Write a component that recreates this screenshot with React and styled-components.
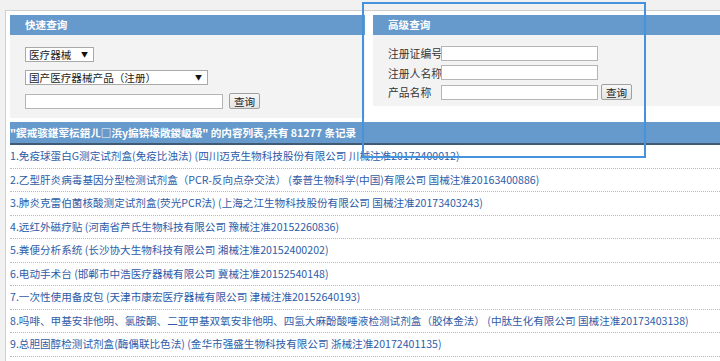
import React from "react";
import styled, { createGlobalStyle } from "styled-components";

const GlobalStyle = createGlobalStyle`
  html, body {
    margin: 0;
    padding: 0;
    background: #f1f1f1;
    font-family: "Noto Sans CJK SC", "Noto Sans", sans-serif;
    overflow: hidden;
  }
`;

const Page = styled.div`
  position: relative;
  width: 720px;
  height: 361px;
  padding-top: 10px;
  box-sizing: border-box;
`;

const Frame = styled.div`
  margin-left: 5px;
  background: #fff;
  border-top: 1px solid #cfcfcf;
  border-left: 1px solid #cfcfcf;
  padding: 4px 0 0 4px;
  height: 351px;
  box-sizing: border-box;
  overflow: hidden;
`;

const Top = styled.div`
  display: flex;
  align-items: flex-start;
  gap: 8px;
  margin-bottom: 4px;
`;

const Panel = styled.div`
  width: ${(p) => p.$width || "auto"};
  flex: ${(p) => (p.$width ? "none" : "1")};
  margin-right: ${(p) => (p.$width ? "0" : "-40px")};
`;

const PanelHead = styled.div`
  height: 20px;
  background: #6699cc;
  color: #fff;
  font-weight: bold;
  font-size: 10.6px;
  line-height: 20px;
  padding-left: 15px;
`;

const PanelBody = styled.div`
  background: #f3f3f3;
  padding: ${(p) => p.$pad};
  display: flex;
  flex-direction: column;
  gap: ${(p) => p.$gap};
`;

const Select = styled.div`
  width: ${(p) => p.$w}px;
  height: 15px;
  box-sizing: border-box;
  border: 1px solid #a9a9a9;
  background: #fff;
  font-size: 10.6px;
  line-height: 13px;
  color: #222;
  padding-left: 3px;
  display: flex;
  justify-content: space-between;
  align-items: center;
`;

const Arrow = styled.span`
  font-size: 7px;
  padding-right: 5px;
  color: #111;
`;

const Line = styled.div`
  display: flex;
  align-items: center;
  gap: ${(p) => p.$gap || "0"};
`;

const Input = styled.input`
  width: ${(p) => p.$w}px;
  height: 15px;
  box-sizing: border-box;
  border: 1px solid #b5b5b5;
  background: #fff;
  margin: 0;
  padding: 0 2px;
  outline: none;
`;

const Button = styled.button`
  height: 16px;
  padding: 0 4px;
  margin: 0;
  border: 1px solid #a0a0a0;
  border-radius: 2px;
  background: linear-gradient(#f7f7f7, #e3e3e3);
  font-family: inherit;
  font-size: 10.6px;
  line-height: 13px;
  color: #222;
`;

const Label = styled.span`
  width: ${(p) => p.$w || 53}px;
  font-size: 10.8px;
  color: #333;
  white-space: nowrap;
`;

const List = styled.div`
  display: flex;
  flex-direction: column;
`;

const ListHead = styled.div`
  height: 21px;
  background: #6699cc;
  border-bottom: 2px solid #405a73;
  color: #fff;
  font-weight: bold;
  font-size: 10.6px;
  line-height: 21px;
  white-space: nowrap;
`;

const Row = styled.div`
  height: 22.5px;
  border-bottom: 1px dotted #b9b9b9;
  color: #2d5ba8;
  font-size: 10.6px;
  line-height: 22px;
  white-space: nowrap;
`;

const Highlight = styled.div`
  position: absolute;
  left: 362px;
  top: 2px;
  width: 284px;
  height: 156px;
  box-sizing: border-box;
  border: 2px solid #4592dd;
  pointer-events: none;
`;

const rows = [
  "1.免疫球蛋白G测定试剂盒(免疫比浊法) (四川迈克生物科技股份有限公司 川械注准20172400012)",
  "2.乙型肝炎病毒基因分型检测试剂盒（PCR-反向点杂交法） (泰普生物科学(中国)有限公司 国械注准20163400886)",
  "3.肺炎克雷伯菌核酸测定试剂盒(荧光PCR法) (上海之江生物科技股份有限公司 国械注准20173403243)",
  "4.远红外磁疗贴 (河南省芦氏生物科技有限公司 豫械注准20152260836)",
  "5.粪便分析系统 (长沙协大生物科技有限公司 湘械注准20152400202)",
  "6.电动手术台 (邯郸市中浩医疗器械有限公司 冀械注准20152540148)",
  "7.一次性使用备皮包 (天津市康宏医疗器械有限公司 津械注准20152640193)",
  "8.吗啡、甲基安非他明、氯胺酮、二亚甲基双氧安非他明、四氢大麻酚酸唾液检测试剂盒（胶体金法） (中肽生化有限公司 国械注准20173403138)",
  "9.总胆固醇检测试剂盒(酶偶联比色法) (金华市强盛生物科技有限公司 浙械注准20172401135)",
];

export default function App() {
  return (
    <Page>
      <GlobalStyle />
      <Frame>
        <Top>
          <Panel $width="355px">
            <PanelHead>快速查询</PanelHead>
            <PanelBody $pad="12px 15px 9px" $gap="8px">
              <Select $w={69}>
                医疗器械<Arrow>▼</Arrow>
              </Select>
              <Select $w={183}>
                国产医疗器械产品（注册）<Arrow>▼</Arrow>
              </Select>
              <Line $gap="6px">
                <Input $w={198} />
                <Button>查询</Button>
              </Line>
            </PanelBody>
          </Panel>
          <Panel>
            <PanelHead>高级查询</PanelHead>
            <PanelBody $pad="10px 15px 6px" $gap="3.5px">
              <Line>
                <Label>注册证编号</Label>
                <Input $w={157} />
              </Line>
              <Line>
                <Label>注册人名称</Label>
                <Input $w={157} />
              </Line>
              <Line $gap="3px">
                <Label $w={50}>产品名称</Label>
                <Input $w={157} />
                <Button>查询</Button>
              </Line>
            </PanelBody>
          </Panel>
        </Top>
        <List>
          <ListHead>
            "鍥戒骇鍖荤枟鍣ㄦ□浜у搧锛堟敞鍐岋級" 的内容列表,共有 81277 条记录
          </ListHead>
          {rows.map((r) => (
            <Row key={r}>{r}</Row>
          ))}
        </List>
      </Frame>
      <Highlight />
    </Page>
  );
}
